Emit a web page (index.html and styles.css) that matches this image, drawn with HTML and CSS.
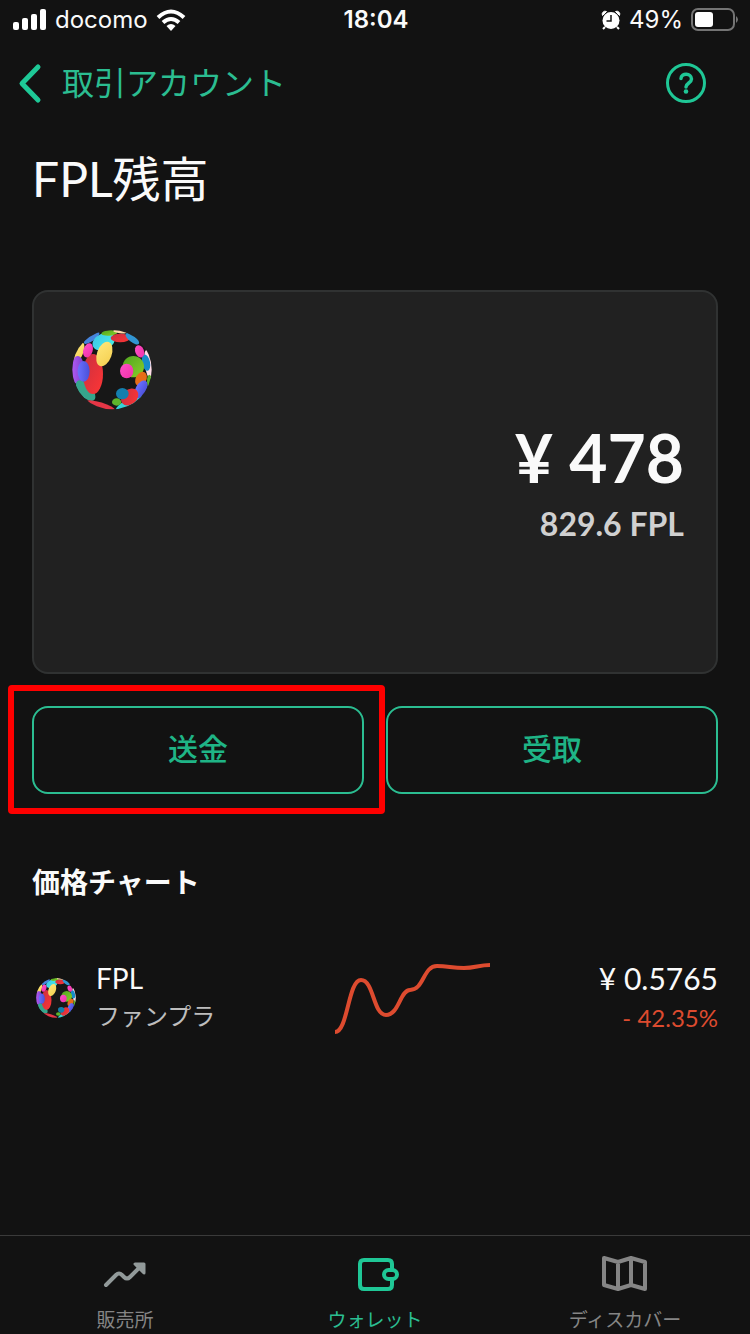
FILE: index.html
```html
<!DOCTYPE html>
<html lang="ja">
<head>
    <meta charset="UTF-8">
    <meta name="viewport" content="width=device-width, initial-scale=1.0">
    <title>FPL残高</title>
    <link rel="stylesheet" href="styles.css">
</head>
<body>
    <!-- Shared token logo -->
    <svg class="defs" width="0" height="0" aria-hidden="true">
        <defs>
            <linearGradient id="gRed" x1="0" y1="0" x2="1" y2="1"><stop offset="0" stop-color="#c83040"/><stop offset="1" stop-color="#ff3535"/></linearGradient>
            <linearGradient id="gPurple" x1="0" y1="0" x2="1" y2="0"><stop offset="0" stop-color="#b55cf5"/><stop offset="1" stop-color="#7a3fd0"/></linearGradient>
            <linearGradient id="gBlue" x1="0" y1="0" x2="1" y2="0"><stop offset="0" stop-color="#6a70ff"/><stop offset="1" stop-color="#4a50d8"/></linearGradient>
            <linearGradient id="gCyan" x1="0" y1="0" x2="1" y2="1"><stop offset="0" stop-color="#3fc4e8"/><stop offset="1" stop-color="#45f0e6"/></linearGradient>
            <linearGradient id="gYellow" x1="0" y1="0" x2="1" y2="1"><stop offset="0" stop-color="#ffe77a"/><stop offset="1" stop-color="#f5cf50"/></linearGradient>
            <linearGradient id="gGreen" x1="0" y1="0" x2="1" y2="1"><stop offset="0" stop-color="#50a520"/><stop offset="1" stop-color="#88cf28"/></linearGradient>
            <linearGradient id="gPink" x1="0" y1="0" x2="1" y2="1"><stop offset="0" stop-color="#ff50c8"/><stop offset="1" stop-color="#f030a8"/></linearGradient>
            <clipPath id="ball"><circle cx="156" cy="149" r="119"/></clipPath>
        </defs>
        <symbol id="token" viewBox="36 30 240 240">
            <circle cx="156" cy="149" r="117" fill="#171717"/>
            <g clip-path="url(#ball)">
                <ellipse cx="95" cy="54" rx="28" ry="9" transform="rotate(-35 95 54)" fill="#4684dc"/>
                <ellipse cx="57" cy="98" rx="12" ry="32" transform="rotate(22 57 98)" fill="url(#gYellow)"/>
                <ellipse cx="53" cy="150" rx="20" ry="42" fill="url(#gPurple)"/>
                <ellipse cx="77" cy="212" rx="19" ry="38" transform="rotate(-42 77 212)" fill="#36a58c"/>
                <ellipse cx="99" cy="162" rx="30" ry="60" fill="url(#gRed)"/>
                <ellipse cx="71" cy="154" rx="18" ry="31" fill="url(#gBlue)"/>
                <ellipse cx="84" cy="91" rx="14" ry="22" transform="rotate(18 84 91)" fill="url(#gPink)"/>
                <ellipse cx="131" cy="65" rx="35" ry="24" transform="rotate(-24 131 65)" fill="url(#gCyan)"/>
                <ellipse cx="148" cy="39" rx="24" ry="8" transform="rotate(-5 148 39)" fill="url(#gGreen)"/>
                <ellipse cx="180" cy="35" rx="20" ry="5" transform="rotate(7 180 35)" fill="#ffd8a8"/>
                <ellipse cx="181" cy="54" rx="29" ry="13" fill="url(#gRed)"/>
                <ellipse cx="217" cy="56" rx="25" ry="10" transform="rotate(38 217 56)" fill="#3295d2"/>
                <ellipse cx="133" cy="102" rx="22" ry="38" transform="rotate(20 133 102)" fill="url(#gYellow)"/>
                <ellipse cx="265" cy="133" rx="11" ry="43" transform="rotate(-8 265 133)" fill="#ffdce8"/>
                <ellipse cx="258" cy="128" rx="12" ry="25" transform="rotate(-12 258 128)" fill="#168cc8"/>
                <ellipse cx="239" cy="94" rx="13" ry="19" transform="rotate(-22 239 94)" fill="url(#gPink)"/>
                <ellipse cx="268" cy="184" rx="7" ry="20" fill="#5cb32a"/>
                <circle cx="220" cy="140" r="32" fill="url(#gGreen)"/>
                <ellipse cx="200" cy="153" rx="20" ry="22" fill="url(#gPink)"/>
                <ellipse cx="243" cy="177" rx="16" ry="23" transform="rotate(28 243 177)" fill="#e76c18"/>
                <ellipse cx="208" cy="250" rx="45" ry="14" transform="rotate(-28 208 250)" fill="#35d2d8"/>
                <ellipse cx="243" cy="208" rx="16" ry="29" transform="rotate(28 243 208)" fill="url(#gBlue)"/>
                <ellipse cx="209" cy="231" rx="29" ry="22" transform="rotate(-42 209 231)" fill="url(#gRed)"/>
                <ellipse cx="187" cy="221" rx="19" ry="17" fill="#147fae"/>
                <ellipse cx="170" cy="246" rx="14" ry="11" fill="#5eb52c"/>
                <ellipse cx="122" cy="257" rx="44" ry="10" transform="rotate(17 122 257)" fill="#e53646"/>
            </g>
        </symbol>
    </svg>

    <div class="status">
        <div class="status-side">
            <svg width="34" height="22" viewBox="0 0 34 22" fill="#fff" aria-hidden="true">
                <rect x="0" y="13" width="6" height="8" rx="2"/><rect x="9" y="9" width="6" height="12" rx="2"/><rect x="18" y="5" width="6" height="16" rx="2"/><rect x="27" y="0" width="6" height="21" rx="2"/>
            </svg>
            <span>docomo</span>
            <svg width="30" height="22" viewBox="0 0 30 22" aria-hidden="true">
                <path d="M2 8.500Q15-3.500 28 8.500M7 13.500Q15 6.500 23 13.500" fill="none" stroke="#fff" stroke-width="4"/><path d="M10.500 17q4.500-4 9 0L15 22z" fill="#fff"/>
            </svg>
        </div>
        <span class="clock">18:04</span>
        <div class="status-side status-right">
            <svg width="20" height="20" viewBox="0 0 20 20" aria-hidden="true">
                <path d="M1.500 5.500a3 3 0 0 1 4-4zM18.500 5.500a3 3 0 0 0-4-4z" fill="#fff" stroke="#fff"/><path d="M4 17l-2 2M16 17l2 2" stroke="#fff" stroke-width="2"/><circle cx="10" cy="10.500" r="8.500" fill="#fff"/><path d="M10 5v6H5.500" fill="none" stroke="#121212" stroke-width="1.500"/>
            </svg>
            <span>49%</span>
            <svg width="48" height="24" viewBox="0 0 48 24" aria-hidden="true">
                <rect x="1" y="1" width="42" height="21" rx="6" fill="none" stroke="#747474" stroke-width="2"/><rect x="4" y="4" width="18" height="15" rx="3" fill="#fff"/><path d="M45 8q4 3.500 0 7z" fill="#747474"/>
            </svg>
        </div>
    </div>

    <header class="nav">
        <a class="back" href="#">
            <svg width="24" height="40" viewBox="0 0 24 40" fill="none" stroke="#1ec997" stroke-width="5" stroke-linecap="round" stroke-linejoin="round" aria-hidden="true"><path d="M20 4L4 20.500 20 37"/></svg>
            <span>取引アカウント</span>
        </a>
        <button class="help" type="button" aria-label="ヘルプ">
            <svg width="40" height="40" viewBox="0 0 40 40" fill="none" stroke="#1fc796" aria-hidden="true"><circle cx="20" cy="20" r="18.500" stroke-width="3"/><path d="M15 15.500C15.200 9.800 25.500 9.800 25.500 16c0 4-5.500 4-5.500 8" stroke-width="3.500" stroke-linecap="round"/><circle cx="20" cy="28.500" r="2.300" fill="#1fc796" stroke="none"/></svg>
        </button>
    </header>

    <main class="content">
        <h1>FPL残高</h1>

        <section class="card">
            <svg class="card-logo" aria-hidden="true"><use href="#token"/></svg>
            <div class="yen">¥ 478</div>
            <div class="amount">829.6 FPL</div>
        </section>

        <div class="actions">
            <div class="action highlight"><button type="button">送金</button></div>
            <div class="action"><button type="button">受取</button></div>
        </div>

        <h2>価格チャート</h2>
        <div class="coin">
            <div class="coin-info">
                <svg class="coin-logo" aria-hidden="true"><use href="#token"/></svg>
                <div class="coin-name">
                    <div class="symbol">FPL</div>
                    <div class="kana">ファンプラ</div>
                </div>
            </div>
            <svg class="chart" width="156" height="72" viewBox="0 0 156 72" fill="none" stroke="#dd4b2f" stroke-width="4" aria-hidden="true"><path d="M0 70C13 70 13 18 26 18S38 53 51 53C64 53 65 28 75 28C89 28 88 4 102 4C113 4 117 6 129 6C140 6 144 3 155 3"/></svg>
            <div class="coin-price">
                <div class="price">¥ 0.5765</div>
                <div class="change">- 42.35%</div>
            </div>
        </div>
    </main>

    <nav class="tabs">
        <a href="#">
            <svg width="44" height="40" viewBox="0 0 44 40" fill="none" stroke="#929a9a" stroke-width="4" stroke-linecap="round" stroke-linejoin="round" aria-hidden="true"><path d="M3 31L13 21q3-3 6 0l2 2q3 3 6 0L39 11"/><path d="M32 10h9v9z" fill="#929a9a" stroke-width="3"/></svg>
            <span>販売所</span>
        </a>
        <a class="active" href="#">
            <svg width="44" height="40" viewBox="0 0 44 40" fill="none" stroke="#1fc796" stroke-width="4" aria-hidden="true"><path d="M39 15V10q0-4-4-4H11Q7 6 7 10v21q0 4 4 4h24q4 0 4-4v-5" /><rect x="31" y="16" width="13" height="9" rx="4.500"/></svg>
            <span>ウォレット</span>
        </a>
        <a href="#">
            <svg width="44" height="40" viewBox="0 0 44 40" fill="none" stroke="#858585" stroke-width="4" stroke-linejoin="round" aria-hidden="true"><path d="M1 4l14 4 13-4 14 4v27l-14-4-13 4-14-4zM15 8v27M28 4v27"/></svg>
            <span>ディスカバー</span>
        </a>
    </nav>
</body>
</html>
```

FILE: styles.css
```css
* {
    box-sizing: border-box;
}

body {
    margin: 0;
    min-height: 100vh;
    display: flex;
    flex-direction: column;
    background-color: #121212;
    color: #fafafa;
    font-family: Lato, "Noto Sans CJK JP", sans-serif;
}

h1, h2 {
    margin: 0;
}

a {
    color: inherit;
    text-decoration: none;
}

button {
    padding: 0;
    border: none;
    background: none;
    font-family: inherit;
    cursor: pointer;
}

svg {
    display: block;
    flex-shrink: 0;
    overflow: visible;
}

.defs {
    position: absolute;
}

.status {
    display: grid;
    grid-template-columns: 1fr auto 1fr;
    align-items: center;
    height: 40px;
    padding: 0 11px 0 13px;
    font-family: Inter, sans-serif;
    font-size: 24px;
    line-height: 40px;
}

.status-side {
    display: flex;
    align-items: center;
    gap: 8px;
}

.status-right {
    justify-content: flex-end;
}

.clock {
    font-weight: 600;
}

.nav {
    display: flex;
    align-items: center;
    justify-content: space-between;
    height: 86px;
    padding: 0 44px 0 18px;
}

.back {
    display: flex;
    align-items: center;
    gap: 20px;
    font-size: 32px;
    line-height: 40px;
    color: #2bbd91;
}

.content {
    flex: 1;
    padding: 16px 32px;
}

h1 {
    font-size: 48px;
    font-weight: 400;
    line-height: 74px;
}

.card {
    min-height: 384px;
    margin-top: 74px;
    padding: 38px 32px 32px 38px;
    border: 2px solid #303232;
    border-radius: 16px;
    background-color: #212121;
    text-align: right;
}

.card-logo {
    width: 80px;
    height: 80px;
}

.yen {
    margin-top: 8px;
    font-size: 66px;
    font-weight: 700;
    line-height: 80px;
}

.amount {
    margin-top: 6px;
    font-size: 32px;
    font-weight: 700;
    line-height: 40px;
    color: #d0d0d0;
}

.actions {
    display: grid;
    grid-template-columns: 1fr 1fr;
    gap: 22px;
    margin-top: 32px;
}

.action {
    position: relative;
}

.action button {
    width: 100%;
    height: 88px;
    padding-bottom: 6px;
    border: 2px solid #2bbd91;
    border-radius: 16px;
    font-size: 30px;
    font-weight: 500;
    color: #1fb486;
}

/* red marker around the send button */
.highlight::after {
    content: "";
    position: absolute;
    inset: -21px -21px -20px -24px;
    border: 6px solid #ff0000;
    border-radius: 4px;
    pointer-events: none;
}

h2 {
    margin-top: 68px;
    font-size: 28px;
    font-weight: 700;
    line-height: 40px;
}

.coin {
    display: flex;
    align-items: center;
    justify-content: space-between;
    margin-top: 56px;
}

.coin-info, .coin-price {
    flex: 1;
}

.coin-info {
    display: flex;
    align-items: center;
    gap: 20px;
    padding-left: 4px;
}

.coin-name {
    padding-bottom: 4px;
}

.coin-logo {
    width: 40px;
    height: 40px;
}

.chart {
    margin-left: 72px;
}

.symbol {
    font-size: 28px;
    line-height: 40px;
}

.kana {
    font-size: 24px;
    line-height: 36px;
    color: #bdbdbd;
}

.coin-price {
    text-align: right;
}

.price {
    font-size: 30px;
    line-height: 40px;
}

.change {
    font-size: 24px;
    line-height: 40px;
    color: #dd4b2f;
}

.tabs {
    display: grid;
    grid-template-columns: repeat(3, 1fr);
    height: 99px;
    padding-top: 18px;
    border-top: 1px solid #3a3a3a;
    font-size: 19px;
    line-height: 28px;
    color: #858585;
}

.tabs a {
    display: flex;
    flex-direction: column;
    align-items: center;
    gap: 12px;
}

.tabs .active {
    color: #2bbd91;
}
```
